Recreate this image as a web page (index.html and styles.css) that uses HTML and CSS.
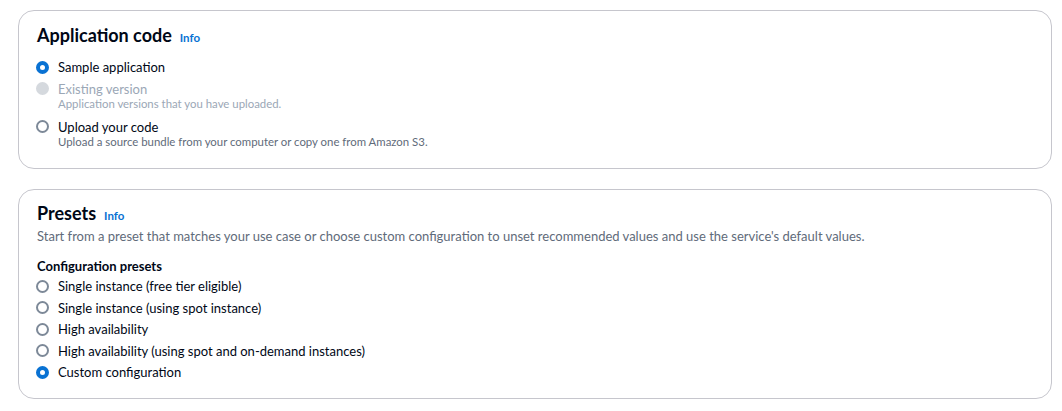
FILE: index.html
```html
<!DOCTYPE html>
<html lang="en">
<head>
<meta charset="utf-8">
<title>Application code</title>
<link rel="stylesheet" href="styles.css">
</head>
<body>
<div class="page">
  <section class="card card-app">
    <header class="card-header">
      <h2 class="title">Application code</h2>
      <a class="info" href="#">Info</a>
    </header>
    <div class="radio-group">
      <label class="radio">
        <span class="dot checked"></span>
        <span class="texts"><span class="label">Sample application</span></span>
      </label>
      <label class="radio disabled">
        <span class="dot"></span>
        <span class="texts">
          <span class="label">Existing version</span>
          <span class="desc">Application versions that you have uploaded.</span>
        </span>
      </label>
      <label class="radio">
        <span class="dot"></span>
        <span class="texts">
          <span class="label">Upload your code</span>
          <span class="desc">Upload a source bundle from your computer or copy one from Amazon S3.</span>
        </span>
      </label>
    </div>
  </section>

  <section class="card card-presets">
    <header class="card-header">
      <h2 class="title">Presets</h2>
      <a class="info" href="#">Info</a>
    </header>
    <p class="card-desc">Start from a preset that matches your use case or choose custom configuration to unset recommended values and use the service's default values.</p>
    <div class="field">
      <div class="field-label">Configuration presets</div>
      <div class="radio-group">
        <label class="radio"><span class="dot"></span><span class="texts"><span class="label">Single instance (free tier eligible)</span></span></label>
        <label class="radio"><span class="dot"></span><span class="texts"><span class="label">Single instance (using spot instance)</span></span></label>
        <label class="radio"><span class="dot"></span><span class="texts"><span class="label">High availability</span></span></label>
        <label class="radio"><span class="dot"></span><span class="texts"><span class="label">High availability (using spot and on-demand instances)</span></span></label>
        <label class="radio"><span class="dot checked"></span><span class="texts"><span class="label">Custom configuration</span></span></label>
      </div>
    </div>
  </section>
</div>
</body>
</html>
```

FILE: styles.css
```css
* { box-sizing: border-box; }
html, body { margin: 0; padding: 0; background: #ffffff; }
body {
  font-family: Lato, "Liberation Sans", Arial, sans-serif;
  color: #000716;
  font-size: 13px;
  line-height: 20px;
}
.page {
  padding: 10px 10px 0 18px;
  display: flex;
  flex-direction: column;
  gap: 20px;
}
.card {
  border: 1px solid #c6c6cd;
  border-radius: 16px;
  background: #fff;
}
.card-app { padding: 13px 18px 18px 17px; }
.card-presets { padding: 12px 18px 16px 17px; }
.card-header {
  display: flex;
  align-items: baseline;
  gap: 8px;
  padding-left: 1px;
}
.title {
  margin: 0;
  font-size: 18px;
  line-height: 22px;
  font-weight: 700;
}
.info {
  color: #0972d3;
  font-size: 11.5px;
  font-weight: 700;
  text-decoration: none;
}
.card-app .card-header { margin-bottom: 9px; }
.card-desc {
  margin: 0 0 10px 0;
  padding-left: 1px;
  color: #5f6b7a;
  font-size: 13px;
  line-height: 20px;
}
.field-label {
  font-weight: 700;
  padding-left: 1px;
}
.radio-group {
  display: flex;
  flex-direction: column;
  gap: 1.5px;
}
.radio {
  display: flex;
  align-items: flex-start;
  gap: 9px;
}
.dot {
  flex: none;
  width: 13px;
  height: 13px;
  margin-top: 3.5px;
  border-radius: 50%;
  border: 2px solid #7d8998;
  background: #fff;
}
.dot.checked {
  border: 4px solid #0972d3;
}
.texts {
  display: flex;
  flex-direction: column;
}
.desc {
  margin: -2.5px 0 3px 0;
  font-size: 11.4px;
  line-height: 16px;
  color: #5f6b7a;
}
.radio:last-child .desc { margin-bottom: 0; }
.radio.disabled .dot {
  border-color: #d5d9de;
  background: #d5d9de;
}
.radio.disabled .label,
.radio.disabled .desc {
  color: #9ba7b6;
}
```
